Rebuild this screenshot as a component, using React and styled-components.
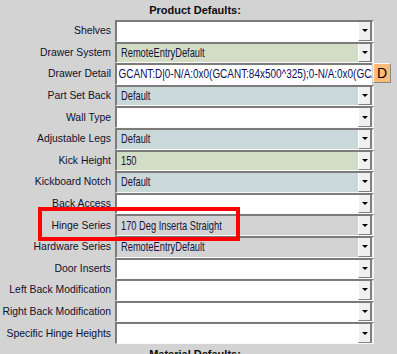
import React from 'react';
import styled, { createGlobalStyle } from 'styled-components';

const GlobalStyle = createGlobalStyle`
  html, body {
    margin: 0;
    padding: 0;
    background: #d3d3d3;
    overflow: hidden;
  }
`;

const ROWS = [
  { label: 'Shelves', tone: 'white' },
  { label: 'Drawer System', value: 'RemoteEntryDefault', tone: 'green' },
  {
    label: 'Drawer Detail',
    text: 'GCANT:D|0-N/A:0x0(GCANT:84x500^325);0-N/A:0x0(GCANT:84x500^325)',
    button: 'D',
  },
  { label: 'Part Set Back', value: 'Default', tone: 'blue' },
  { label: 'Wall Type', tone: 'white' },
  { label: 'Adjustable Legs', value: 'Default', tone: 'blue' },
  { label: 'Kick Height', value: '150', tone: 'green' },
  { label: 'Kickboard Notch', value: 'Default', tone: 'blue' },
  { label: 'Back Access', tone: 'white' },
  { label: 'Hinge Series', value: '170 Deg Inserta Straight', tone: 'gray' },
  { label: 'Hardware Series', value: 'RemoteEntryDefault', tone: 'gray' },
  { label: 'Door Inserts', tone: 'white' },
  { label: 'Left Back Modification', tone: 'white' },
  { label: 'Right Back Modification', tone: 'white' },
  { label: 'Specific Hinge Heights', tone: 'white' },
];

const TONES = {
  white: '#ffffff',
  green: '#d3dcc5',
  blue: '#cbd8d9',
  gray: '#d3d3d3',
};

const ArrowIcon = () => (
  <svg width="6" height="3" viewBox="0 0 6 3">
    <polygon points="0,0 6,0 3,3" fill="#000" />
  </svg>
);

const App = () => (
  <>
    <GlobalStyle />
    <Page>
      <Heading>Product Defaults:</Heading>
      <Form>
        {ROWS.map((row) => (
          <React.Fragment key={row.label}>
            <Label>{row.label}</Label>
            {row.text !== undefined ? (
              <TextField>
                <TextValue>{row.text}</TextValue>
              </TextField>
            ) : (
              <Select $tone={row.tone}>
                <ValueBox>
                  <Value>{row.value}</Value>
                </ValueBox>
                <DropButton>
                  <ArrowIcon />
                </DropButton>
              </Select>
            )}
            {row.button ? <SideButton>{row.button}</SideButton> : <span />}
          </React.Fragment>
        ))}
        <Highlight />
      </Form>
      <Heading>Material Defaults:</Heading>
    </Page>
  </>
);

const Page = styled.div`
  width: 390px;
  font-family: 'Liberation Sans', Arial, sans-serif;
`;

const Heading = styled.div`
  height: 20px;
  line-height: 20px;
  text-align: center;
  font-size: 11px;
  font-weight: bold;
  color: #0d0d0d;
`;

const Form = styled.div`
  position: relative;
  display: grid;
  grid-template-columns: 115px 259px 17px;
  grid-auto-rows: 21.6px;
`;

const Label = styled.div`
  display: flex;
  align-items: center;
  justify-content: flex-end;
  padding-right: 4px;
  font-size: 10.4px;
  color: #10102e;
  white-space: nowrap;
`;

const fieldFrame = `
  box-sizing: border-box;
  border-top: 2px solid #7b7b7b;
  border-left: 2px solid #7b7b7b;
  border-bottom: 1px solid #fafafa;
  overflow: hidden;
  white-space: nowrap;
`;

const Select = styled.div`
  ${fieldFrame}
  display: flex;
  align-items: stretch;
  background: ${(p) => TONES[p.$tone]};
  border-right: 2px solid #f4f4f4;
`;

const ValueBox = styled.span`
  flex: 1;
  min-width: 0;
  display: flex;
  align-items: center;
  overflow: hidden;
  padding-left: 4px;
`;

/* the source uses a narrow face; squeeze the regular one to its width */
const Value = styled.span`
  font-size: 12.4px;
  color: #14143c;
  transform: scaleX(0.75);
  transform-origin: left center;
`;

const DropButton = styled.span`
  box-sizing: border-box;
  width: 14px;
  flex-shrink: 0;
  display: flex;
  align-items: center;
  justify-content: center;
  background: #f0f0f0;
  border-left: 1px solid #ffffff;
  border-right: 2px solid #808080;
  border-bottom: 1px solid #808080;
`;

const TextField = styled.div`
  ${fieldFrame}
  display: flex;
  align-items: center;
  background: #ffffff;
  margin-right: 2px;
`;

const TextValue = styled.span`
  padding-left: 2px;
  font-size: 12.6px;
  color: #0c0c5a;
  transform: scaleX(0.79);
  transform-origin: left center;
`;

const SideButton = styled.div`
  box-sizing: border-box;
  height: 20px;
  margin-left: -1px;
  display: flex;
  align-items: center;
  justify-content: center;
  background: #ffbb77;
  border-top: 1px solid #f6f6f6;
  border-left: 1px solid #f6f6f6;
  border-right: 1px solid #8a8a8a;
  border-bottom: 1px solid #8a8a8a;
  font-size: 14px;
  color: #000;
`;

const Highlight = styled.div`
  position: absolute;
  left: 38px;
  top: 187px;
  width: 202px;
  height: 34px;
  box-sizing: border-box;
  border: 4.5px solid #ff0000;
  pointer-events: none;
`;

export default App;
